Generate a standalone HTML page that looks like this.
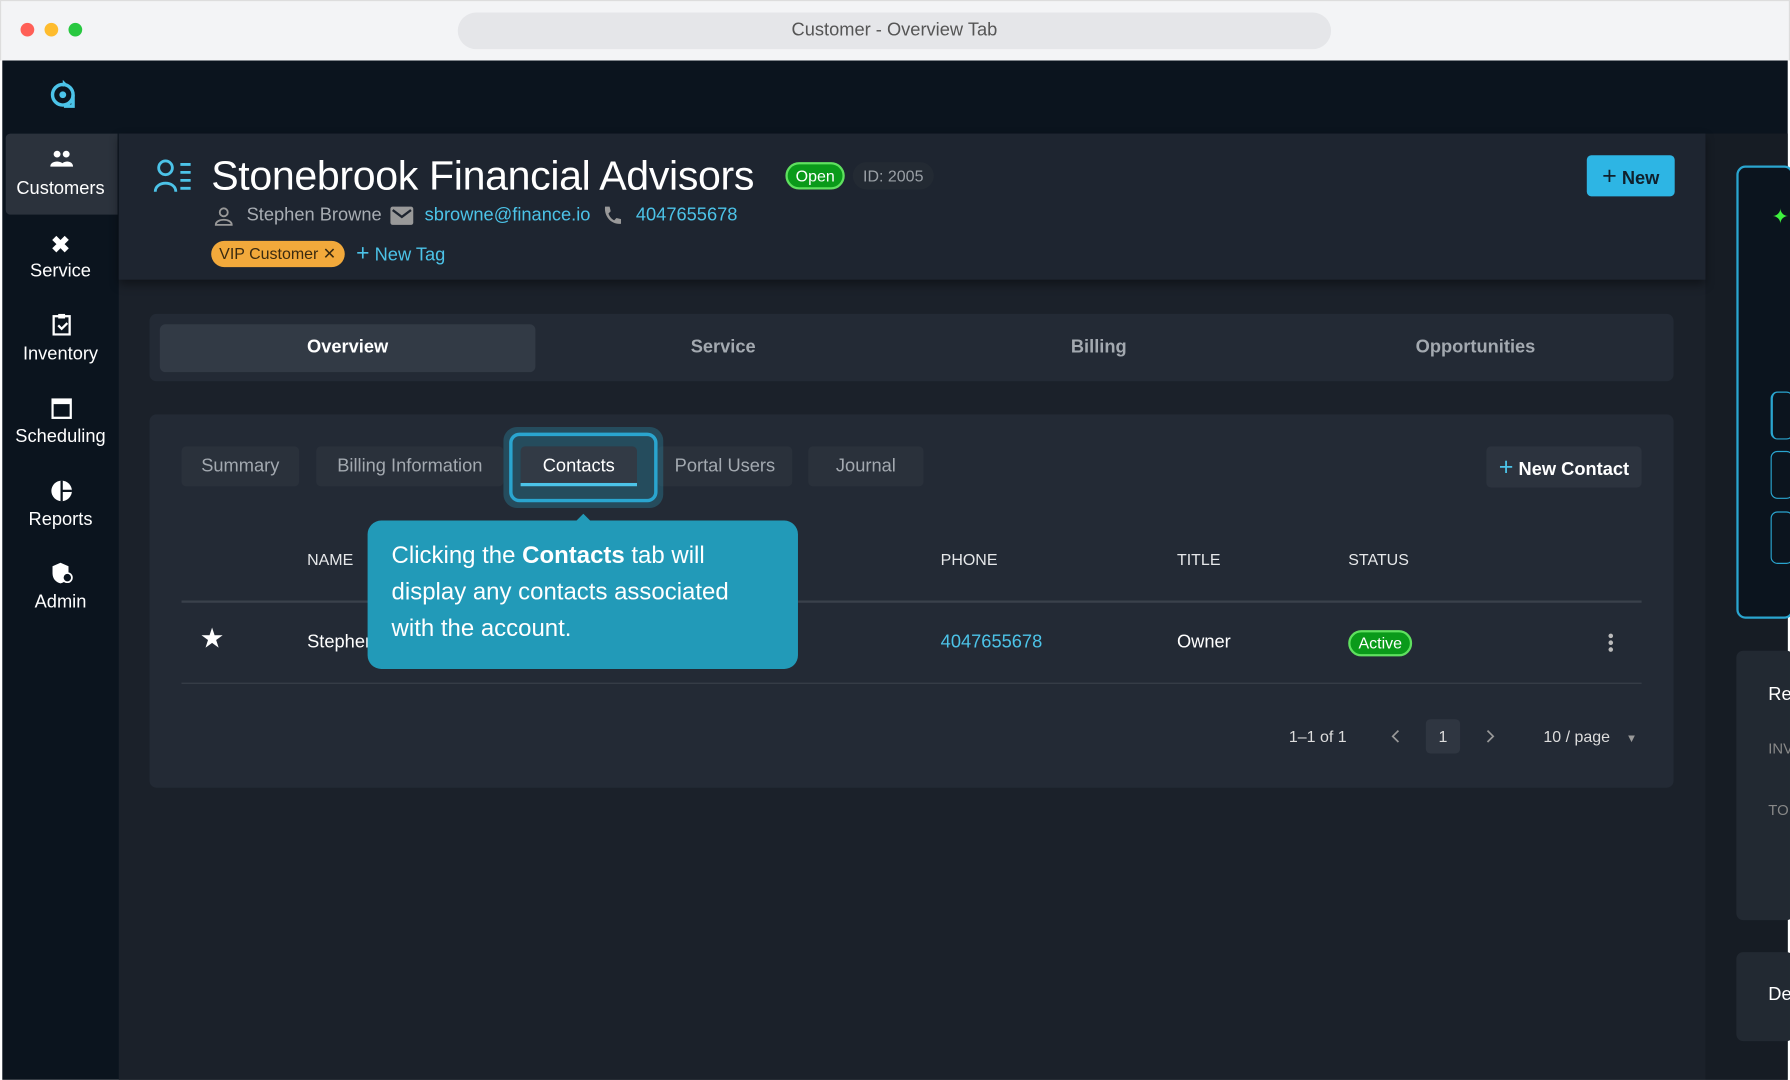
<!DOCTYPE html>
<html><head><meta charset="utf-8"><style>
*{box-sizing:border-box;margin:0;padding:0}
body{width:1790px;height:1080px;overflow:hidden;background:#fff;font-family:"Liberation Sans",sans-serif}
#s{position:absolute;left:0;top:0;width:1568px;height:946px;transform:scale(1.14158);transform-origin:0 0;overflow:hidden}
.a{position:absolute}
.t{white-space:nowrap}
.side{color:#fff;font-size:16px;text-align:center;width:102px;left:2px}
.sub{position:absolute;top:391px;height:35px;background:#2a313b;border-radius:4px;color:#a3a9b0;font-size:16px;line-height:35px;text-align:center}
.th{position:absolute;top:482px;color:#e6e8ea;font-size:14px}
</style></head><body><div id="s">
<div class="a" style="left:0;top:0;width:1568px;height:53px;background:#f3f4f6;border:1px solid #ddd;border-bottom:none"></div>
<div class="a" style="left:18px;top:20px;width:12px;height:12px;border-radius:6px;background:#ff5f57"></div>
<div class="a" style="left:39px;top:20px;width:12px;height:12px;border-radius:6px;background:#febc2e"></div>
<div class="a" style="left:60px;top:20px;width:12px;height:12px;border-radius:6px;background:#28c840"></div>
<div class="a t" style="left:401px;top:11px;width:765px;height:32px;border-radius:16px;background:#e5e6e9;color:#555;font-size:16px;line-height:32px;text-align:center">Customer - Overview Tab</div>
<div class="a" style="left:2px;top:53px;width:1564px;height:893px;background:#0b141e"></div>
<svg class="a" style="left:42px;top:68px" width="26" height="28" viewBox="0 0 26 28"><circle cx="13" cy="15" r="9" fill="none" stroke="#4cc3e8" stroke-width="3"/><circle cx="13" cy="15" r="3" fill="#4cc3e8"/><path d="M13 2l4 4-4 2z" fill="#4cc3e8"/><path d="M22 15v10h-8" fill="none" stroke="#4cc3e8" stroke-width="3"/></svg>
<div class="a" style="left:5px;top:117px;width:98px;height:71px;background:#2b323c;border-radius:4px 0 0 4px"></div>
<svg class="a" style="left:44px;top:131px" width="20" height="16"><circle cx="6" cy="4" r="3" fill="#fff"/><circle cx="14" cy="4" r="3" fill="#fff"/><path d="M0 15c0-6 12-6 12 0zM9 15c1-6 11-6 11 0z" fill="#fff"/></svg>
<div class="a side" style="top:157px">Customers</div>
<div class="a side" style="top:202px;font-size:20px;font-weight:bold">✖</div>
<div class="a side" style="top:229px">Service</div>
<svg class="a" style="left:45px;top:274px" width="18" height="20"><rect x="2" y="3" width="14" height="16" fill="none" stroke="#fff" stroke-width="2"/><rect x="6" y="1" width="6" height="4" fill="#fff"/><path d="M6 11l3 3 5-5" fill="none" stroke="#fff" stroke-width="2"/></svg>
<div class="a side" style="top:302px">Inventory</div>
<svg class="a" style="left:45px;top:347px" width="18" height="20"><rect x="1" y="3" width="16" height="16" fill="none" stroke="#fff" stroke-width="2"/><rect x="1" y="3" width="16" height="4" fill="#fff"/></svg>
<div class="a side" style="top:374px">Scheduling</div>
<svg class="a" style="left:44px;top:420px" width="20" height="20"><circle cx="10" cy="10" r="9" fill="#fff"/><path d="M10 1v18M10 10h9" stroke="#0b141e" stroke-width="2"/></svg>
<div class="a side" style="top:447px">Reports</div>
<svg class="a" style="left:44px;top:492px" width="20" height="20"><path d="M9 1l7 3v6c0 5-3 8-7 9-4-1-7-4-7-9V4z" fill="#fff"/><circle cx="15" cy="14" r="4" fill="#0b141e" stroke="#fff" stroke-width="1.5"/></svg>
<div class="a side" style="top:519px">Admin</div>
<div class="a" style="left:104px;top:117px;width:1390px;height:829px;background:#1b212a"></div>
<div class="a" style="left:1494px;top:117px;width:72px;height:829px;background:#161c24"></div>
<div class="a" style="left:1521px;top:145px;width:50px;height:397px;border:2px solid #2aa5cf;border-radius:8px;background:#0b141e"></div>
<div class="a" style="left:1552px;top:180px;color:#3ef03e;font-size:18px">✦</div>
<div class="a" style="left:1551px;top:343px;width:20px;height:42px;border:1px solid #2aa5cf;border-radius:6px;border-left-width:2px"></div>
<div class="a" style="left:1551px;top:395px;width:20px;height:42px;border:1px solid #2aa5cf;border-radius:6px"></div>
<div class="a" style="left:1551px;top:448px;width:20px;height:46px;border:1px solid #2aa5cf;border-radius:6px"></div>
<div class="a" style="left:1521px;top:570px;width:50px;height:236px;background:#222932;border-radius:6px"></div>
<div class="a" style="left:1549px;top:600px;color:#fff;font-size:16px">Re</div>
<div class="a" style="left:1549px;top:648px;color:#888;font-size:13px">INV</div>
<div class="a" style="left:1549px;top:702px;color:#888;font-size:13px">TO</div>
<div class="a" style="left:1521px;top:834px;width:50px;height:78px;background:#222932;border-radius:6px"></div>
<div class="a" style="left:1549px;top:863px;color:#fff;font-size:16px">De</div>
<div class="a" style="left:104px;top:117px;width:1390px;height:128px;background:#1e2530;box-shadow:0 4px 8px rgba(0,0,0,.4)"></div>
<svg class="a" style="left:134px;top:138px" width="36" height="32"><circle cx="11" cy="9" r="6" fill="none" stroke="#4cc3e8" stroke-width="2.5"/><path d="M2 30c0-10 18-10 18 0" fill="none" stroke="#4cc3e8" stroke-width="2.5"/><path d="M24 6h9M24 13h9M24 20h9M24 27h9" stroke="#4cc3e8" stroke-width="2.5"/></svg>
<div class="a t" style="left:185px;top:133px;color:#fff;font-size:36px;letter-spacing:-0.3px">Stonebrook Financial Advisors</div>
<div class="a t" style="left:688px;top:142px;height:24px;padding:0 7px;border:2px solid #5fe05f;background:#0a9a1a;color:#fff;border-radius:12px;font-size:14px;line-height:20px">Open</div>
<div class="a t" style="left:747px;top:142px;height:24px;padding:0 9px;background:#232a33;color:#9aa0a6;border-radius:12px;font-size:14px;line-height:24px">ID: 2005</div>
<svg class="a" style="left:188px;top:181px" width="16" height="17"><circle cx="8" cy="5" r="3.5" fill="none" stroke="#999" stroke-width="1.6"/><path d="M1 16c0-6 14-6 14 0z" fill="none" stroke="#999" stroke-width="1.6"/></svg>
<div class="a t" style="left:216px;top:180px;color:#a8adb3;font-size:16px">Stephen Browne</div>
<div class="a" style="left:342px;top:181px;width:20px;height:16px;background:#999;border-radius:2px"></div>
<svg class="a" style="left:342px;top:181px" width="20" height="16"><path d="M2 3l8 6 8-6" fill="none" stroke="#1e2530" stroke-width="2"/></svg>
<div class="a t" style="left:372px;top:180px;color:#4cc3e8;font-size:16px">sbrowne@finance.io</div>
<svg class="a" style="left:527px;top:180px" width="18" height="18"><path d="M3 1l4 0 1 4-2 2c1 3 3 5 5 6l2-2 4 1v4c-8 1-15-6-14-15z" fill="#999"/></svg>
<div class="a t" style="left:557px;top:180px;color:#4cc3e8;font-size:16px">4047655678</div>
<div class="a t" style="left:185px;top:211px;height:23px;padding:0 7px;background:#f2a93b;color:#3a2a10;border-radius:12px;font-size:14px;line-height:23px">VIP Customer ✕</div>
<div class="a t" style="left:312px;top:211px;color:#4cc3e8;font-size:16px"><span style="font-size:20px">+</span> New Tag</div>
<div class="a t" style="left:1390px;top:136px;width:77px;height:36px;background:#2db5e4;border-radius:4px;color:#10202c;font-size:16px;font-weight:bold;line-height:36px;text-align:center"><span style="font-size:22px;font-weight:normal">+</span> New</div>
<div class="a" style="left:131px;top:275px;width:1335px;height:59px;background:#232a35;border-radius:6px"></div>
<div class="a" style="left:140px;top:284px;width:329px;height:42px;background:#323a45;border-radius:5px"></div>
<div class="a t" style="left:140px;top:296px;width:329px;text-align:center;color:#fff;font-size:16px;font-weight:bold">Overview</div>
<div class="a t" style="left:469px;top:296px;width:329px;text-align:center;color:#a3a9b0;font-size:16px;font-weight:bold">Service</div>
<div class="a t" style="left:798px;top:296px;width:329px;text-align:center;color:#a3a9b0;font-size:16px;font-weight:bold">Billing</div>
<div class="a t" style="left:1127px;top:296px;width:331px;text-align:center;color:#a3a9b0;font-size:16px;font-weight:bold">Opportunities</div>
<div class="a" style="left:131px;top:363px;width:1335px;height:327px;background:#232a35;border-radius:6px"></div>
<div class="sub" style="left:159px;width:103px">Summary</div>
<div class="sub" style="left:277px;width:164px">Billing Information</div>
<div class="sub" style="left:576px;width:118px">Portal Users</div>
<div class="sub" style="left:708px;width:101px">Journal</div>
<div class="a" style="left:441px;top:374px;width:140px;height:71px;border-radius:12px;background:rgba(42,140,170,.35)"></div>
<div class="a" style="left:446px;top:379px;width:130px;height:61px;border-radius:9px;border:3px solid #2aa5cf"></div>
<div class="a" style="left:456px;top:391px;width:102px;height:35px;background:#323a45;border-radius:4px 4px 0 0;color:#fff;font-size:16px;line-height:35px;text-align:center;border-bottom:3px solid #4cc3e8">Contacts</div>
<div class="a t" style="left:1302px;top:391px;width:136px;height:36px;background:#2c333e;border-radius:4px;color:#fff;font-size:16px;font-weight:bold;line-height:36px;text-align:center"><span style="color:#4cc3e8;font-size:22px;font-weight:normal">+</span> New Contact</div>
<div class="th" style="left:269px">NAME</div>
<div class="th" style="left:824px">PHONE</div>
<div class="th" style="left:1031px">TITLE</div>
<div class="th" style="left:1181px">STATUS</div>
<div class="a" style="left:159px;top:526px;width:1279px;height:2px;background:#3a414b"></div>
<div class="a" style="left:159px;top:598px;width:1279px;height:1px;background:#3a414b"></div>
<div class="a" style="left:175px;top:545px;color:#fff;font-size:24px">★</div>
<div class="a t" style="left:269px;top:554px;color:#fff;font-size:16px">Stephen Browne</div>
<div class="a t" style="left:824px;top:554px;color:#4cc3e8;font-size:16px">4047655678</div>
<div class="a t" style="left:1031px;top:554px;color:#fff;font-size:16px">Owner</div>
<div class="a t" style="left:1181px;top:552px;height:23px;padding:0 7px;border:2px solid #5fe05f;background:#0a9a1a;color:#fff;border-radius:12px;font-size:14px;line-height:19px">Active</div>
<div class="a" style="left:1409px;top:555px;width:4px;height:4px;border-radius:2px;background:#bbb;box-shadow:0 6px #bbb,0 12px #bbb"></div>
<div class="a t" style="left:1129px;top:637px;color:#ddd;font-size:14px">1–1 of 1</div>
<svg class="a" style="left:1218px;top:639px" width="10" height="12"><path d="M7 1L2 6l5 5" fill="none" stroke="#999" stroke-width="1.5"/></svg>
<div class="a" style="left:1249px;top:630px;width:30px;height:30px;background:#2f3641;border-radius:4px;color:#ddd;font-size:14px;line-height:30px;text-align:center">1</div>
<svg class="a" style="left:1300px;top:639px" width="10" height="12"><path d="M3 1l5 5-5 5" fill="none" stroke="#999" stroke-width="1.5"/></svg>
<div class="a t" style="left:1352px;top:637px;color:#ddd;font-size:14px">10 / page <span style="font-size:10px;color:#999;margin-left:10px">▼</span></div>
<div class="a" style="left:322px;top:456px;width:377px;height:130px;background:#229ab8;border-radius:12px"></div>
<div class="a" style="left:504px;top:450px;width:0;height:0;border-left:7px solid transparent;border-right:7px solid transparent;border-bottom:7px solid #229ab8"></div>
<div class="a" style="left:343px;top:471px;color:#fff;font-size:21px;line-height:32px;width:325px">Clicking the <b>Contacts</b> tab will display any contacts associated with the account.</div>
</div></body></html>
